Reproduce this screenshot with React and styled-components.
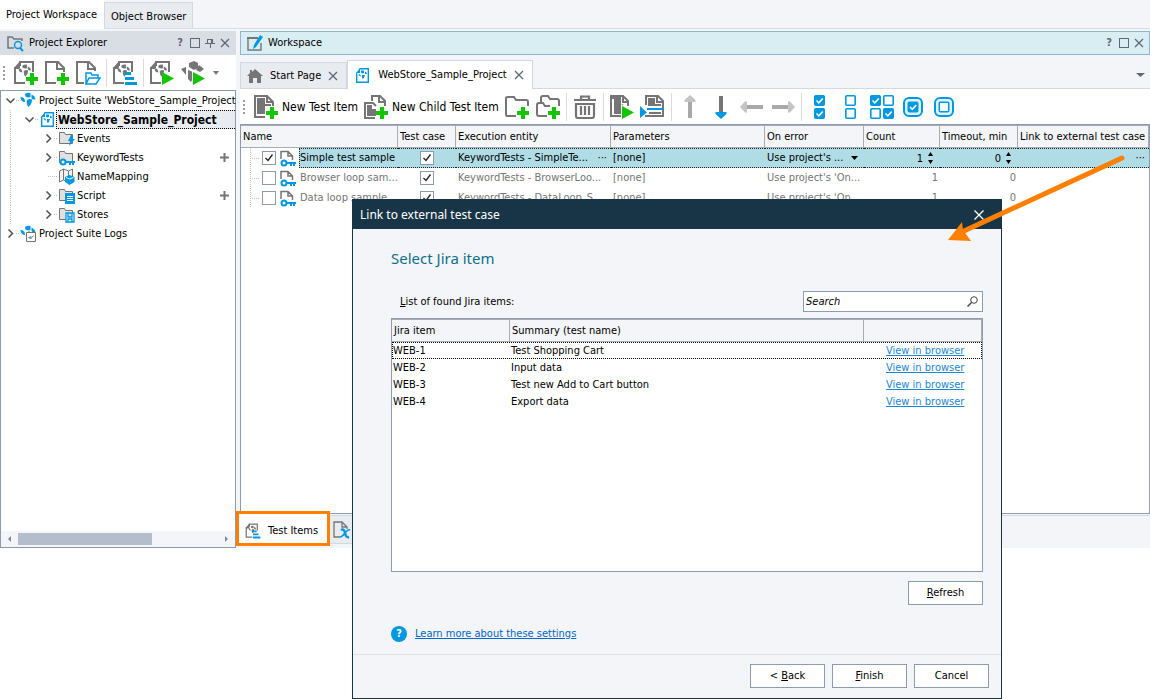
import React, { useState } from 'react';
import styled, { createGlobalStyle, css } from 'styled-components';

const GRAY = '#757575';
const BLUE = '#0098e0';
const GREEN = '#14c400';

const GlobalStyle = createGlobalStyle`
  * {
    box-sizing: border-box;
  }

  body {
    margin: 0;
    background: #fff;
    color: #000;
    font: 11px/14px 'DejaVu Sans Condensed', 'Noto Sans', sans-serif;
  }

  button, input, select {
    font: inherit;
    color: inherit;
  }

  button {
    padding: 0;
    border: 0;
    background: none;
    white-space: nowrap;
  }

  svg {
    display: block;
    flex: none;
  }
`;

/* ---------- icons ---------- */

const Petals = ({ color = GRAY }) => (
  <g fill={color}>
    <path d="M5 2Q8 0 10.500 1V5Q8 6 5.500 4.500z" />
    <path d="M.5 5Q5 5 5 10Q1 10 .5 5z" />
    <path d="M7 8.500Q8 6 12 7.500Q12 12 8.500 15Q6 12 7 8.500z" />
    <path d="M11.500 2.500Q15 4 15.500 7.500Q12 8 11.500 6z" />
  </g>
);

const Plus = () => <path d="M17 13h4v4h4v4h-4v4h-4v-4h-4v-4h4z" fill={GREEN} />;
const Play = () => <path d="M13 12 25 18.500 13 25z" fill={GREEN} />;

const Icon = ({ size = 26, box = 26, children }) => (
  <svg width={size} height={size} viewBox={`0 0 ${box} ${box}`} aria-hidden="true">
    {children}
  </svg>
);

const ProjectDoc = ({ color = GRAY }) => (
  <>
    <path
      d="M12 23H2V8H6M7 6V2H20V12"
      fill="none"
      stroke={color}
      strokeWidth="2"
    />
    <path d="M1 8 7 1V8z" fill={color} />
    <g transform="translate(5 4) scale(.85)">
      <Petals color={color} />
    </g>
  </>
);

const PageLines = () => (
  <path
    d="M12 23H2V2H14L20 8V12M13 2V9H20"
    fill="none"
    stroke={GRAY}
    strokeWidth="2"
  />
);

const ProjectAdd = () => <Icon><ProjectDoc /><Plus /></Icon>;
const FileAdd = () => <Icon><PageLines /><Plus /></Icon>;
const ProjectRun = () => <Icon><ProjectDoc /><Play /></Icon>;

const FileOpen = () => (
  <Icon>
    <path d="M9 23H2V2H14L20 8V11M13 2V9H20" fill="none" stroke={GRAY} strokeWidth="2" />
    <path
      d="M11 24V13h5l1 2h6v3M11 24l3-6h11l-4 6z"
      fill="#fff"
      stroke={BLUE}
      strokeWidth="1.500"
    />
  </Icon>
);

const ProjectItems = ({ size }) => (
  <Icon size={size}>
    <ProjectDoc />
    <path d="M13 12h6v3h-6zM13 17h9v3h-9zM13 22h12v3H13z" fill={BLUE} />
  </Icon>
);

const SuiteRun = () => (
  <Icon>
    <path
      d="M9 3 14 1 18 3V8L14 10 9 7zM1 9 6 7V15zM8 10 13 12V18L11 22 8 19zM19 5 24 9 20 12 16 10z"
      fill={GRAY}
    />
    <path d="M12 10 26 18.500 12 26z" fill="#fff" />
    <Play />
  </Icon>
);

const TestItemAdd = () => (
  <Icon>
    <path d="M12 23H2V2H14L20 8V12M14 2V8H20" fill="none" stroke={GRAY} strokeWidth="2" />
    <path d="M4 4H12V10H18V12H12V20H4z" fill={GRAY} />
    <Plus />
  </Icon>
);

const ChildItemAdd = () => (
  <Icon>
    <path
      d="M9 7V2H17L22 7V12M16 2V8H22M12 24H2V9H10L13 12"
      fill="none"
      stroke={GRAY}
      strokeWidth="2"
    />
    <path d="M4 11H9V15H13V22H4z" fill={GRAY} />
    <Plus />
  </Icon>
);

const FolderAdd = () => (
  <Icon>
    <path d="M12 22H3Q2 22 2 20V4Q2 3 4 3H10L12 6H22Q24 6 24 8V12" fill="none" stroke={GRAY} strokeWidth="2" />
    <Plus />
  </Icon>
);

const FoldersAdd = () => (
  <Icon>
    <path
      d="M6 8V4Q6 2 8 2H13L15 5H22Q24 5 24 7V12M12 22H4Q2 22 2 20V11Q2 9 4 9H8L10 12H15"
      fill="none"
      stroke={GRAY}
      strokeWidth="2"
    />
    <Plus />
  </Icon>
);

const Trash = () => (
  <Icon size={24} box={24}>
    <path
      d="M1 5H23M8 4V1.500H16V4M3 9V21Q3 23 5 23H19Q21 23 21 21V9zM8 11V20M12 11V20M16 11V20"
      fill="none"
      stroke={GRAY}
      strokeWidth="2.200"
    />
  </Icon>
);

const RunItem = () => (
  <Icon>
    <path d="M12 22H2V2H14L19 7V12M14 2V8H20" fill="none" stroke={GRAY} strokeWidth="2" />
    <path d="M3 3H12V10H14V20H5V5H3z" fill={GRAY} />
    <path d="M12 10 26 18 12 26z" fill="#fff" />
    <Play />
  </Icon>
);

const RunFrom = () => (
  <Icon>
    <path d="M6 11V2H18L23 7V22H6V21M17 2V8H23" fill="none" stroke={GRAY} strokeWidth="2" />
    <path d="M8 4H15V10H21V12H8zM9 18H21V20H9z" fill={GRAY} />
    <path d="M0 12 7 18.500 0 24zM7 14H23V16H7z" fill={BLUE} />
  </Icon>
);

const ArrowIcon = ({ turn = 0, head = '#c4c4c4', tail = '#a9a9a9' }) => (
  <Icon size={24} box={24}>
    <g transform={`rotate(${turn} 12 12)`}>
      <path d="M10 6H14V23H10z" fill={tail} />
      <path d="M6.500 7V5L12 0 17.500 5V7z" fill={head} />
    </g>
  </Icon>
);

const MiniBox = ({ x, y, on }) => (
  <g transform={`translate(${x} ${y})`}>
    <rect x=".8" y=".8" width="9.400" height="9.400" rx="1" fill={on ? BLUE : '#fff'} stroke={BLUE} strokeWidth="1.600" />
    {on && <path d="M2.500 5.500 4.800 7.800 8.800 3.500" fill="none" stroke="#fff" strokeWidth="1.500" />}
  </g>
);

const RoundBox = ({ on }) => (
  <Icon size={20} box={20}>
    <rect x="1" y="1" width="18" height="18" rx="5" fill="#e0f2fb" stroke={BLUE} strokeWidth="2" />
    <MiniBox x={4.5} y={4.5} on={on} />
  </Icon>
);

const SuiteIcon = () => (
  <Icon size={17} box={17}><Petals color={BLUE} /></Icon>
);

const ProjectIcon = ({ size = 17 }) => (
  <Icon size={size} box={17}>
    <path d="M5.500 1.700H14.300V15.300H2.700V6" fill="none" stroke={BLUE} strokeWidth="1.400" />
    <path d="M2 6 6 1V6z" fill={BLUE} />
    <path d="M7 3.500H10V6Q8 7 7 5.500zM4.500 7Q7 7 7 9.500Q4.500 9 4.500 7zM11 4.500Q13 5 13 7L11 7zM8 8H11Q10.500 11 8.500 12Q7.500 10 8 8z" fill={BLUE} />
  </Icon>
);

const TreeFolder = ({ children }) => (
  <Icon size={17} box={17}>
    <path d="M1.500 13.500V2.500H6.500L7.500 4.500H14.500V13.500z" fill="#e0e0e0" stroke={GRAY} />
    {children}
  </Icon>
);

const KeyShape = () => (
  <g fill="none" stroke={BLUE} strokeWidth="2">
    <circle cx="5" cy="13" r="2.500" fill="#fff" />
    <path d="M8 13H17M12 13V16M15 13V16" />
  </g>
);

const EventsIcon = () => (
  <TreeFolder><path d="M13 5 10 11H12L11 16 17 9H14L15 5z" fill={BLUE} /></TreeFolder>
);
const KeywordIcon = () => <TreeFolder><KeyShape /></TreeFolder>;
const ScriptIcon = () => (
  <TreeFolder>
    <path d="M7 6H17V17H7z" fill={BLUE} />
    <path d="M9 9.500H15M9 11.500H15M9 13.500H15" stroke="#fff" />
  </TreeFolder>
);
const StoresIcon = () => (
  <TreeFolder>
    <path d="M8 7H16V16H8zM10 7V11H14V7M10 16V13H14V16" fill="#fff" stroke={BLUE} strokeWidth="1.300" />
  </TreeFolder>
);
const MapIcon = () => (
  <Icon size={17} box={17}>
    <path d="M1.500 3 5.500 1 10.500 3 14.500 1V13L10 14 5.500 12 1.500 14zM5.500 1V12M10.500 3V8" fill="#f1f1f1" stroke={GRAY} />
    <path d="M11.500 7 16.500 9V14L11.500 17 7 14V9z" fill={BLUE} />
    <path d="M8 9.500 11.500 11 15.500 9.500" stroke="#fff" fill="none" />
  </Icon>
);
const LogsIcon = () => (
  <Icon size={17} box={17}>
    <Petals color={BLUE} />
    <path d="M6.500 7.500H15.500V16.500H6.500zM9 6V8M13 6V8M8.500 12 10.500 14 13.500 10.500" fill="#fff" stroke={GRAY} />
  </Icon>
);

const KeyTestIcon = () => (
  <Icon size={17} box={17}>
    <path d="M2 9V1.500H9L13.500 6V10M9 1V6H14" fill="none" stroke={GRAY} strokeWidth="1.500" />
    <KeyShape />
  </Icon>
);

const VariablesIcon = () => (
  <Icon size={18} box={18}>
    <path d="M7 16H1V1H9L14 6V8M9 1V6H14" fill="none" stroke={GRAY} strokeWidth="1.300" />
    <path d="M8 9Q11 7 12 12T16 16" fill="none" stroke={BLUE} strokeWidth="2.400" />
    <path d="M17 9Q15 8 12 12T7 16" fill="none" stroke={BLUE} strokeWidth="1.500" />
  </Icon>
);

const ExplorerIcon = () => (
  <Icon size={17} box={17}>
    <path d="M7 13H1V2H5L7 4H15V6" fill="none" stroke={GRAY} strokeWidth="1.500" />
    <circle cx="11" cy="10" r="3.500" fill="none" stroke={BLUE} strokeWidth="1.500" />
    <path d="M13 13 16 16" stroke={BLUE} strokeWidth="2" />
  </Icon>
);

const WorkspaceIcon = () => (
  <Icon size={16} box={16}>
    <path d="M11 3H1V15H14V8" fill="none" stroke={GRAY} strokeWidth="1.400" />
    <path d="M0 2H11V4H0z" fill={GRAY} />
    <path d="M13 0 16 2 9 12 6 14 7 10z" fill={BLUE} />
  </Icon>
);

const HomeIcon = () => (
  <Icon size={16} box={16}>
    <path d="M8 1 16 8H14V15H10V10H6V15H2V8H0L3 5V2H5V4z" fill={GRAY} />
  </Icon>
);

const WinIcon = ({ type }) => (
  <Icon size={10} box={10}>
    <g fill="none" stroke="#5f6878">
      {type === 'max' && <rect x=".5" y=".5" width="9" height="9" />}
      {type === 'pin' && <path d="M2.500 1V5M2 1.500H7M7.500 1V5M6.500 2V5M0 5.500H10M5.500 6V10" />}
      {type === 'close' && <path d="M1 1 9 9M9 1 1 9" strokeWidth="1.300" />}
    </g>
  </Icon>
);

const Chevron = ({ open }) => (
  <Icon size={9} box={9}>
    <path
      d={open ? 'M.5 2.500 4.500 6.500 8.500 2.500' : 'M2.500 .5 6.500 4.500 2.500 8.500'}
      fill="none"
      stroke="#4c5058"
      strokeWidth="1.500"
    />
  </Icon>
);

const Caret = ({ width = 7, color = '#000' }) => (
  <svg width={width} height="4" viewBox="0 0 8 4" preserveAspectRatio="none" aria-hidden="true">
    <path d="M0 0H8L4 4z" fill={color} />
  </svg>
);

/* ---------- frame ---------- */

const Page = styled.div`
  position: relative;
  min-width: 1010px;
  min-height: 699px;
`;

const Window = styled.div`
  display: flex;
  flex-direction: column;
  min-height: calc(100vh - 151px);
  background: #f4f5f8;
`;

const TopTabs = styled.div`
  display: flex;
  align-items: flex-end;
  height: 29px;
  border-bottom: 1px solid #d9dde5;
`;

const TopTab = styled.button`
  height: ${(p) => (p.$active ? 29 : 26)}px;
  padding: ${(p) => (p.$active ? '0 7px 0 6px' : '3px 6px 0')};
  margin-bottom: ${(p) => (p.$active ? -1 : 0)}px;
  border: ${(p) => (p.$active ? 0 : '1px solid #d4d9e1')};
  border-bottom: 0;
  background: ${(p) => (p.$active ? '#fff' : '#e8ebf0')};
`;

const Panels = styled.main`
  flex: 1;
  display: flex;
  gap: 4px;
  padding-top: 2px;
`;

const Explorer = styled.section`
  display: flex;
  flex-direction: column;
  width: 236px;
  flex: none;
`;

const Workspace = styled.section`
  display: flex;
  flex-direction: column;
  flex: 1;
  min-width: 0;
`;

const PanelHeader = styled.header`
  display: flex;
  align-items: center;
  gap: 5px;
  height: 24px;
  padding: 0 5px 0 6px;
  background: ${(p) => (p.$active ? '#d9eef2' : '#d9dde4')};
  border: 1px solid ${(p) => (p.$active ? '#8fb5d3' : '#d9dde4')};

  h2 {
    flex: 1;
    margin: 0;
    font-size: 11px;
    font-weight: 400;
  }
`;

const WinButton = styled.button`
  display: flex;
  justify-content: center;
  width: 10px;
  color: #5f6878;
  font-weight: 700;
`;

const Toolbar = styled.div`
  display: flex;
  align-items: center;
  gap: 5px;
  height: 35px;
  padding-left: 3px;
  background: #fff;
  font-size: 12px;
`;

const Grip = styled.span`
  width: 2px;
  height: 14px;
  margin-right: 3px;
  background: repeating-linear-gradient(#9a9a9a 0 2px, transparent 2px 4px);
`;

const Separator = styled.span`
  width: 1px;
  height: 28px;
  background: #dcdcdc;
`;

const ToolButton = styled.button`
  display: flex;
  align-items: center;
  justify-content: center;
  gap: 3px;
  min-width: ${(p) => (p.$narrow ? 10 : 26)}px;
`;

/* ---------- project tree ---------- */

const Tree = styled.div`
  flex: 1;
  display: flex;
  flex-direction: column;
  border: 1px solid #8c9ab2;
  background: #fff;

  ul {
    margin: 0;
    padding: 0;
    list-style: none;
  }
`;

const TreeRow = styled.li`
  display: flex;
  align-items: center;
  height: 19px;
`;

const Guide = styled.span`
  width: 19px;
  height: 19px;
  flex: none;
  background: ${(p) =>
    p.$line ? 'linear-gradient(#c4c4c4 50%, transparent 50%) 9px 0 / 1px 2px repeat-y' : 'none'};
`;

const Toggle = styled.span`
  display: flex;
  align-items: center;
  padding-left: 5px;
  width: 19px;
  height: 19px;
  flex: none;
  background:
    linear-gradient(90deg, #fff 9px, transparent 9px),
    linear-gradient(90deg, #c4c4c4 50%, transparent 50%) 9px 9px / 2px 1px repeat-x;

  svg {
    background: #fff;
  }
`;

const TreeLabel = styled.span`
  flex: 1;
  height: 19px;
  line-height: 18px;
  padding-left: 1px;
  white-space: nowrap;
  border: 1px dotted transparent;
  border-right: 0;

  ${(p) =>
    p.$selected &&
    css`
      background: #e8ebf0;
      border-color: #000;
      font-weight: 700;
      font-size: 12px;
    `}
`;

const AddButton = styled.button`
  width: 9px;
  margin-right: 6px;
`;

const HScroll = styled.div`
  display: flex;
  align-items: center;
  gap: 4px;
  height: 16px;
  margin-top: auto;
  padding: 0 5px;
  background: #f4f5f8;
`;

const Thumb = styled.span`
  width: 134px;
  height: 12px;
  margin-left: 2px;
  margin-right: auto;
  background: #b4bdcc;
`;

/* ---------- workspace ---------- */

const DocTabs = styled.div`
  display: flex;
  align-items: flex-end;
  height: 34px;
  border-bottom: 1px solid #d4d9e1;
  padding-right: 5px;

  > svg {
    margin: 0 0 11px auto;
  }
`;

const DocTab = styled.div`
  display: flex;
  align-items: center;
  gap: 7px;
  height: ${(p) => (p.$active ? 29 : 26)}px;
  margin-bottom: ${(p) => (p.$active ? -1 : 0)}px;
  padding: 0 8px 0 6px;
  background: ${(p) => (p.$active ? '#fff' : '#e8ebf0')};
  border: 1px solid #d4d9e1;
  border-bottom: 0;
`;

const GridArea = styled.div`
  flex: 1;
  border: 1px solid #8c9ab2;
  background: #fff;
`;

const Grid = styled.table`
  width: 100%;
  table-layout: fixed;
  border-collapse: separate;
  border-spacing: 0;

  th {
    height: 23px;
    padding: 0 2px;
    background: #f4f5f8;
    border: solid #a9acb2;
    border-width: 1px 1px 1px 0;
    font-weight: 400;
    text-align: left;
    white-space: nowrap;
  }

  td {
    height: 20px;
    padding: 0 2px;
    white-space: nowrap;
    overflow: hidden;
  }
`;

const ItemRow = styled.tr`
  color: ${(p) => (p.$selected ? '#000' : '#757575')};

  ${(p) =>
    p.$selected &&
    css`
      td:not(:first-child) {
        background: #b0dce5;
        border: dotted #202020;
        border-width: 1px 0;
      }
    `}
`;

const NameCell = styled.div`
  display: flex;
  align-items: center;
  gap: 3px;
  height: 20px;
  margin-right: -2px;
`;

const Branch = styled.span`
  width: 9px;
  height: 20px;
  margin-left: 7px;
  background:
    linear-gradient(#c4c4c4 50%, transparent 50%) 0 0 / 1px 2px repeat-y,
    linear-gradient(90deg, #c4c4c4 50%, transparent 50%) 0 10px / 2px 1px repeat-x;
`;

const NameText = styled.span`
  flex: 1;
  height: 20px;
  line-height: 18px;
  border: 1px dotted transparent;
  border-right: 0;

  ${(p) =>
    p.$selected &&
    css`
      background: #b0dce5;
      border-color: #202020;
    `}
`;

const CheckBox = styled.input`
  appearance: none;
  display: block;
  width: 14px;
  height: 14px;
  margin: 0 ${(p) => (p.$center ? 'auto' : '0')};
  border: 1px solid #8c9ab2;
  background: #fff;

  &:checked {
    background: #fff
      url("data:image/svg+xml,%3Csvg xmlns='http://www.w3.org/2000/svg' viewBox='0 0 12 12'%3E%3Cpath d='M2.500 6 5 8.500 9.500 2.500' fill='none' stroke='%23222' stroke-width='1.300'/%3E%3C/svg%3E");
  }
`;

const CellEditor = styled.div`
  display: flex;
  align-items: center;
  justify-content: space-between;
  gap: 5px;
  padding-right: ${(p) => p.$inset || 2}px;

  input,
  select {
    appearance: none;
    flex: 1;
    min-width: 0;
    height: 16px;
    padding: 0;
    border: 0;
    background: none;
    opacity: 1;
  }

  input {
    text-align: right;
  }
`;

const Spinner = styled.span`
  display: grid;
  gap: 4px;

  svg:first-child {
    transform: rotate(180deg);
  }
`;

const NumberText = styled.div`
  text-align: right;
`;

const BottomTabs = styled.div`
  display: flex;
  height: 33px;
  margin-top: 1px;
  border-top: 1px solid #d4d9e1;
`;

const BottomTab = styled.button`
  display: flex;
  align-items: center;
  gap: 7px;
  height: 28px;
  padding: 0 3px;
  background: ${(p) => (p.$active ? '#fff' : '#e8ebf0')};
  border-bottom: 1px solid #d4d9e1;

  ${(p) =>
    p.$active &&
    css`
      height: 29px;
      padding: 4px 9px 0 6px;
      margin: -2px 3px 0 -1px;
      position: relative;
      outline: 3px solid #ff8000;
      border: 0;
    `}
`;

/* ---------- dialog ---------- */

const Dialog = styled.section`
  position: absolute;
  left: 352px;
  top: 199px;
  width: 650px;
  display: flex;
  flex-direction: column;
  background: #f4f5f8;
  border: 1px solid #183548;
`;

const DialogTitle = styled.header`
  display: flex;
  align-items: center;
  justify-content: space-between;
  height: 29px;
  padding: 0 17px 0 7px;
  background: #183548;
  color: #fff;
  font: 12px/16px 'Noto Sans', sans-serif;
`;

const DialogBody = styled.div`
  flex: 1;
  display: flex;
  flex-direction: column;
  padding: 19px 18px 0 38px;

  h1 {
    margin: 0;
    color: #0f7089;
    font: 400 15px/20px 'Noto Sans', sans-serif;
  }
`;

const ListHead = styled.div`
  display: flex;
  align-items: center;
  justify-content: space-between;
  margin: 23px 0 6px;
  padding-left: 9px;
`;

const SearchBox = styled.div`
  display: flex;
  align-items: center;
  width: 180px;
  height: 21px;
  padding: 0 4px 0 2px;
  background: #fff;
  border: 1px solid #8c9ab2;

  input {
    flex: 1;
    min-width: 0;
    padding: 0;
    border: 0;
    outline: 0;
    background: none;
    font-style: italic;
  }

  input::placeholder {
    color: #000;
    opacity: 1;
  }
`;

const JiraList = styled.div`
  height: 254px;
  border: 1px solid #8c9ab2;
  background: #fff;
`;

const JiraTable = styled(Grid)`
  td {
    height: 17px;
    padding: 0 1px;
  }

  td:last-child {
    padding-left: 22px;
  }
`;

const JiraRow = styled.tr`
  ${(p) =>
    p.$selected &&
    css`
      outline: 1px dotted #000;
      outline-offset: -1px;
    `}
`;

const Link = styled.a`
  color: ${(p) => (p.$strong ? '#0066cc' : '#1c86d1')};
  text-decoration: underline;
`;

const PushButton = styled.button`
  width: 75px;
  height: 24px;
  background: #fff;
  border: 1px solid #8c9ab2;
`;

const RefreshRow = styled.div`
  display: flex;
  justify-content: flex-end;
  margin-top: 9px;
`;

const HelpRow = styled.div`
  display: flex;
  align-items: center;
  gap: 8px;
  margin: 21px 0 12px;
`;

const HelpBadge = styled.span`
  width: 16px;
  height: 16px;
  border-radius: 50%;
  background: ${BLUE};
  color: #fff;
  font-weight: 700;
  line-height: 16px;
  text-align: center;
`;

const DialogFooter = styled.footer`
  display: flex;
  justify-content: flex-end;
  gap: 7px;
  padding: 9px 12px 10px;
  border-top: 1px solid #dfe1e4;
`;

const Pointer = styled.svg`
  position: absolute;
  left: 944px;
  top: 150px;
`;

/* ---------- data ---------- */

const treeRows = [
  { level: 0, open: true, icon: SuiteIcon, label: "Project Suite 'WebStore_Sample_Project" },
  { level: 1, open: true, icon: ProjectIcon, label: 'WebStore_Sample_Project', selected: true },
  { level: 2, open: false, icon: EventsIcon, label: 'Events' },
  { level: 2, open: false, icon: KeywordIcon, label: 'KeywordTests', add: true },
  { level: 2, icon: MapIcon, label: 'NameMapping' },
  { level: 2, open: false, icon: ScriptIcon, label: 'Script', add: true },
  { level: 2, open: false, icon: StoresIcon, label: 'Stores' },
  { level: 0, open: false, icon: LogsIcon, label: 'Project Suite Logs' },
];

const items = [
  { name: 'Simple test sample', entity: 'KeywordTests - SimpleTe...', error: "Use project's ...", on: true },
  { name: 'Browser loop sam...', entity: 'KeywordTests - BrowserLoo...', error: "Use project's 'On..." },
  { name: 'Data loop sample', entity: 'KeywordTests - DataLoop_S...', error: "Use project's 'On..." },
];

const jiraItems = [
  ['WEB-1', 'Test Shopping Cart'],
  ['WEB-2', 'Input data'],
  ['WEB-3', 'Test new Add to Cart button'],
  ['WEB-4', 'Export data'],
];

/* ---------- parts ---------- */

const WindowButtons = ({ pin }) => (
  <>
    <WinButton aria-label="Help">?</WinButton>
    <WinButton aria-label="Maximize"><WinIcon type="max" /></WinButton>
    {pin && <WinButton aria-label="Pin"><WinIcon type="pin" /></WinButton>}
    <WinButton aria-label="Close"><WinIcon type="close" /></WinButton>
  </>
);

const ProjectTree = () => (
  <Tree>
    <ul>
      {treeRows.map(({ level, open, icon: RowIcon, label, selected, add }) => (
        <TreeRow key={label}>
          {level > 0 && <Guide $line />}
          {level > 1 && <Guide />}
          <Toggle>{open !== undefined && <Chevron open={open} />}</Toggle>
          <RowIcon />
          <TreeLabel $selected={selected}>{label}</TreeLabel>
          {add && (
            <AddButton aria-label={`Add to ${label}`}>
              <Icon size={9} box={9}><path d="M4.500 0V9M0 4.500H9" stroke={GRAY} strokeWidth="2" /></Icon>
            </AddButton>
          )}
        </TreeRow>
      ))}
    </ul>
    <HScroll>
      <Icon size={6} box={6}><path d="M5 0V6L2 3z" fill="#7d8aa3" /></Icon>
      <Thumb />
      <Icon size={6} box={6}><path d="M1 0V6L4 3z" fill="#7d8aa3" /></Icon>
    </HScroll>
  </Tree>
);

const NumberEditor = ({ label, value }) => (
  <CellEditor $inset={5}>
    <input type="text" aria-label={label} defaultValue={value} />
    <Spinner><Caret width={5} /><Caret width={5} /></Spinner>
  </CellEditor>
);

const TestItemsGrid = () => (
  <Grid>
    <colgroup>
      <col style={{ width: 157 }} />
      <col style={{ width: 58 }} />
      <col style={{ width: 155 }} />
      <col style={{ width: 154 }} />
      <col style={{ width: 99 }} />
      <col style={{ width: 76 }} />
      <col style={{ width: 78 }} />
      <col />
    </colgroup>
    <thead>
      <tr>
        <th>Name</th>
        <th>Test case</th>
        <th>Execution entity</th>
        <th>Parameters</th>
        <th>On error</th>
        <th>Count</th>
        <th>Timeout, min</th>
        <th>Link to external test case</th>
      </tr>
    </thead>
    <tbody>
      {items.map((item) => (
        <ItemRow key={item.name} $selected={item.on}>
          <td>
            <NameCell>
              <Branch />
              <CheckBox type="checkbox" aria-label={`Run ${item.name}`} defaultChecked={item.on} />
              <KeyTestIcon />
              <NameText $selected={item.on}>{item.name}</NameText>
            </NameCell>
          </td>
          <td>
            <CheckBox type="checkbox" aria-label={`${item.name} is a test case`} defaultChecked $center />
          </td>
          <td>
            {item.on ? (
              <CellEditor>
                {item.entity}
                <button aria-label="Choose entity">···</button>
              </CellEditor>
            ) : (
              item.entity
            )}
          </td>
          <td>[none]</td>
          <td>
            {item.on ? (
              <CellEditor $inset={4}>
                <select aria-label="On error"><option>{item.error}</option></select>
                <Caret />
              </CellEditor>
            ) : (
              item.error
            )}
          </td>
          <td>{item.on ? <NumberEditor label="Count" value="1" /> : <NumberText>1</NumberText>}</td>
          <td>{item.on ? <NumberEditor label="Timeout" value="0" /> : <NumberText>0</NumberText>}</td>
          <td>
            {item.on && (
              <CellEditor>
                <span />
                <button aria-label="Choose external test case">···</button>
              </CellEditor>
            )}
          </td>
        </ItemRow>
      ))}
    </tbody>
  </Grid>
);

const ItemsToolbar = () => (
  <Toolbar>
    <Grip />
    <ToolButton><TestItemAdd />New Test Item</ToolButton>
    <ToolButton><ChildItemAdd />New Child Test Item</ToolButton>
    <ToolButton aria-label="New folder"><FolderAdd /></ToolButton>
    <ToolButton aria-label="New child folder"><FoldersAdd /></ToolButton>
    <Separator />
    <ToolButton aria-label="Delete"><Trash /></ToolButton>
    <Separator />
    <ToolButton aria-label="Run item"><RunItem /></ToolButton>
    <ToolButton aria-label="Run from item"><RunFrom /></ToolButton>
    <Separator />
    <ToolButton aria-label="Move up"><ArrowIcon /></ToolButton>
    <ToolButton aria-label="Move down"><ArrowIcon turn={180} head={BLUE} tail={GRAY} /></ToolButton>
    <ToolButton aria-label="Move left"><ArrowIcon turn={270} /></ToolButton>
    <ToolButton aria-label="Move right"><ArrowIcon turn={90} /></ToolButton>
    <Separator />
    <ToolButton aria-label="Check all">
      <Icon size={24} box={24}><MiniBox x={6} y={0} on /><MiniBox x={6} y={13} on /></Icon>
    </ToolButton>
    <ToolButton aria-label="Uncheck all">
      <Icon size={24} box={24}><MiniBox x={6} y={0} /><MiniBox x={6} y={13} /></Icon>
    </ToolButton>
    <ToolButton aria-label="Invert">
      <Icon size={24} box={24}>
        <MiniBox x={0} y={0} on /><MiniBox x={13} y={0} />
        <MiniBox x={0} y={13} /><MiniBox x={13} y={13} on />
      </Icon>
    </ToolButton>
    <ToolButton aria-label="Check group"><RoundBox on /></ToolButton>
    <ToolButton aria-label="Uncheck group"><RoundBox /></ToolButton>
  </Toolbar>
);

const LinkDialog = () => {
  const [search, setSearch] = useState('');

  return (
    <Dialog role="dialog" aria-label="Link to external test case">
      <DialogTitle>
        Link to external test case
        <button aria-label="Close">
          <Icon size={10} box={10}><path d="M.5 .5 9.500 9.500M9.500 .5 .5 9.500" stroke="#fff" strokeWidth="1.300" /></Icon>
        </button>
      </DialogTitle>
      <DialogBody>
        <h1>Select Jira item</h1>
        <ListHead>
          <label htmlFor="search"><u>L</u>ist of found Jira items:</label>
          <SearchBox>
            <input id="search" placeholder="Search" value={search} onChange={(e) => setSearch(e.target.value)} />
            <Icon size={11} box={11}>
              <circle cx="7" cy="4" r="3.300" fill="none" stroke="#444" />
              <path d="M4.500 6.500 .5 10.500" stroke="#444" strokeWidth="1.500" />
            </Icon>
          </SearchBox>
        </ListHead>
        <JiraList>
          <JiraTable>
            <colgroup>
              <col style={{ width: '20%' }} />
              <col style={{ width: '60%' }} />
              <col style={{ width: '20%' }} />
            </colgroup>
            <thead>
              <tr>
                <th>Jira item</th>
                <th>Summary (test name)</th>
                <th aria-label="Link" />
              </tr>
            </thead>
            <tbody>
              {jiraItems.map(([id, summary], i) => (
                <JiraRow key={id} $selected={i === 0}>
                  <td>{id}</td>
                  <td>{summary}</td>
                  <td><Link href="#">View in browser</Link></td>
                </JiraRow>
              ))}
            </tbody>
          </JiraTable>
        </JiraList>
        <RefreshRow><PushButton><u>R</u>efresh</PushButton></RefreshRow>
        <HelpRow>
          <HelpBadge>?</HelpBadge>
          <Link href="#" $strong>Learn more about these settings</Link>
        </HelpRow>
      </DialogBody>
      <DialogFooter>
        <PushButton>&lt; <u>B</u>ack</PushButton>
        <PushButton><u>F</u>inish</PushButton>
        <PushButton>Cancel</PushButton>
      </DialogFooter>
    </Dialog>
  );
};

const App = () => (
  <Page>
    <GlobalStyle />
    <Window>
      <TopTabs>
        <TopTab $active>Project Workspace</TopTab>
        <TopTab>Object Browser</TopTab>
      </TopTabs>
      <Panels>
        <Explorer>
          <PanelHeader>
            <ExplorerIcon />
            <h2>Project Explorer</h2>
            <WindowButtons pin />
          </PanelHeader>
          <Toolbar>
            <Grip />
            <ToolButton aria-label="New project"><ProjectAdd /></ToolButton>
            <ToolButton aria-label="New item"><FileAdd /></ToolButton>
            <ToolButton aria-label="Open"><FileOpen /></ToolButton>
            <Separator />
            <ToolButton aria-label="Test items"><ProjectItems /></ToolButton>
            <Separator />
            <ToolButton aria-label="Run project"><ProjectRun /></ToolButton>
            <ToolButton aria-label="Run suite"><SuiteRun /></ToolButton>
            <ToolButton aria-label="More" $narrow><Caret width={6} color="#777" /></ToolButton>
          </Toolbar>
          <ProjectTree />
        </Explorer>
        <Workspace>
          <PanelHeader $active>
            <WorkspaceIcon />
            <h2>Workspace</h2>
            <WindowButtons />
          </PanelHeader>
          <DocTabs>
            <DocTab>
              <HomeIcon />
              Start Page
              <WinButton aria-label="Close Start Page"><WinIcon type="close" /></WinButton>
            </DocTab>
            <DocTab $active>
              <ProjectIcon />
              WebStore_Sample_Project
              <WinButton aria-label="Close project tab"><WinIcon type="close" /></WinButton>
            </DocTab>
            <Caret width={9} color="#5f6878" />
          </DocTabs>
          <ItemsToolbar />
          <GridArea><TestItemsGrid /></GridArea>
          <BottomTabs>
            <BottomTab $active><ProjectItems size={16} />Test Items</BottomTab>
            <BottomTab aria-label="Variables"><VariablesIcon /></BottomTab>
          </BottomTabs>
        </Workspace>
      </Panels>
    </Window>
    <LinkDialog />
    <Pointer width="184" height="94" viewBox="0 0 184 94" aria-hidden="true">
      <path d="M178 8 20 81" stroke="#ff8000" strokeWidth="5" strokeLinecap="round" />
      <path d="M4 90 18 72 19 80 27 91z" fill="#ff8000" />
    </Pointer>
  </Page>
);

export default App;
